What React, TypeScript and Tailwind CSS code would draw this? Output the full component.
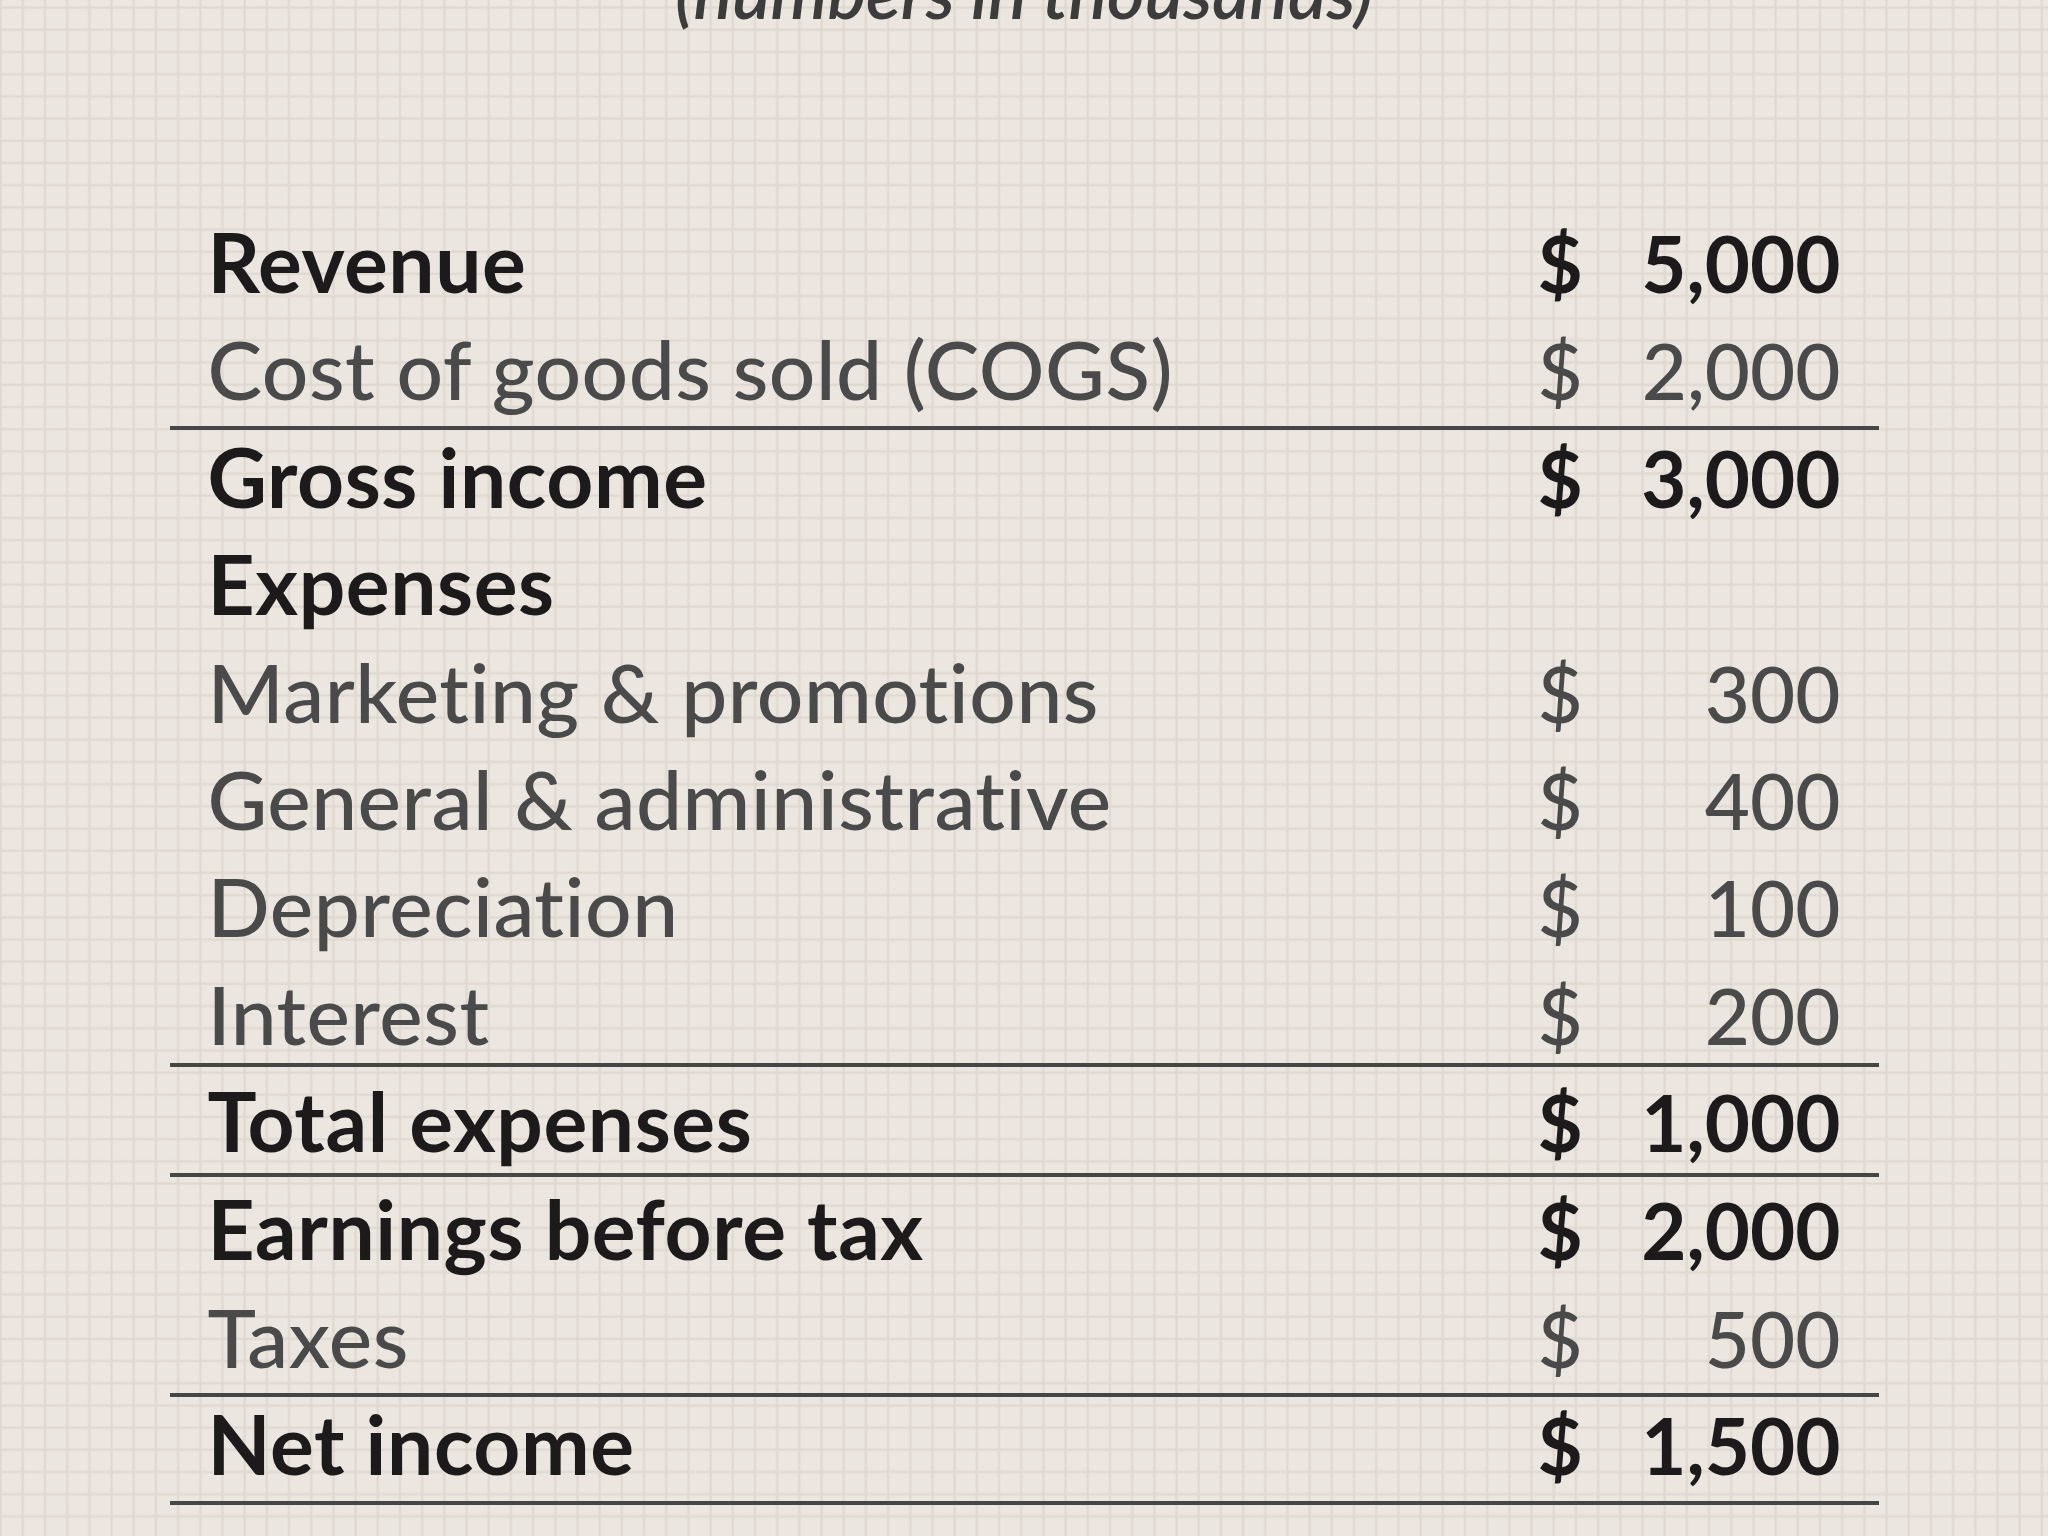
type Row = {
  label: string;
  amount: string;
  strong?: boolean;
  rule?: boolean;
  box?: string;
};

// rows sit on a 107.4px pitch; the two rules around "Total expenses" sit a bit higher
const rows: Row[] = [
  { label: "Revenue", amount: "5,000", strong: true },
  { label: "Cost of goods sold (COGS)", amount: "2,000", rule: true },
  { label: "Gross income", amount: "3,000", strong: true },
  { label: "Expenses", amount: "", strong: true },
  { label: "Marketing & promotions", amount: "300" },
  { label: "General & administrative", amount: "400" },
  { label: "Depreciation", amount: "100" },
  { label: "Interest", amount: "200", rule: true, box: "h-[100px]" },
  { label: "Total expenses", amount: "1,000", strong: true, rule: true, box: "h-[110px] pt-[7.4px]" },
  { label: "Earnings before tax", amount: "2,000", strong: true, box: "h-[113px] pt-[5.6px]" },
  { label: "Taxes", amount: "500", rule: true },
  { label: "Net income", amount: "1,500", strong: true, rule: true },
];

export default function App() {
  return (
    <div className="min-h-screen overflow-hidden bg-[#ebe6e0] bg-[linear-gradient(to_right,transparent_0px,#dfd8d0_1px,#dfd8d0_2px,transparent_3.5px),linear-gradient(to_bottom,transparent_0px,#dfd8d0_1px,#dfd8d0_2px,transparent_3.5px)] bg-[size:22.2px_22.2px] bg-[position:-1px_6px] font-['Lato','Open_Sans',sans-serif] [font-variant-ligatures:none]">
      <p className="-mt-[45px] h-[72px] text-center text-[72px] leading-[72px] font-semibold italic text-[#3c3c3c]">
        (numbers in thousands)
      </p>

      <div className="mx-auto mt-[188px] w-[1709px]">
        {rows.map((r) => (
          <div
            key={r.label}
            className={`flex items-baseline justify-between ${r.box ?? "h-[107.4px]"} ${
              r.rule ? "border-b-4 border-[#464646]" : ""
            } ${
              r.strong
                ? "font-bold tracking-[0.6px] text-[#1c1a1a]"
                : "font-medium tracking-[0.5px] text-[#4a4a4a]"
            }`}
          >
            <span className="pl-[38px] text-[82px] leading-[92px]">{r.label}</span>
            {r.amount && (
              <span className="mr-[38px] flex w-[303px] justify-between text-[78px] leading-[92px] tracking-normal">
                <span>$</span>
                <span>{r.amount}</span>
              </span>
            )}
          </div>
        ))}
      </div>
    </div>
  );
}
